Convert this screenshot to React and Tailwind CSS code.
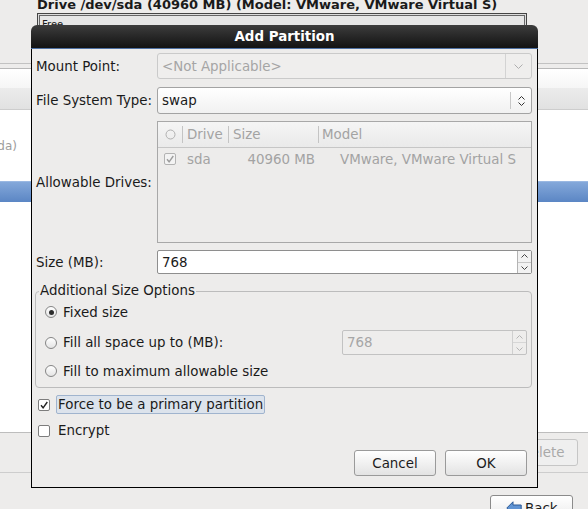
import React from "react";

const Radio = ({ checked }) => (
  <span className="flex h-[12px] w-[12px] shrink-0 items-center justify-center rounded-full border border-[#858585] bg-linear-to-b from-white to-[#e4e4e4]">
    {checked && <span className="h-[5px] w-[5px] rounded-full bg-[#2b2b2b]" />}
  </span>
);

const CheckBox = ({ checked, disabled }) => (
  <span
    className={`flex h-[12px] w-[12px] shrink-0 items-center justify-center rounded-[2px] border ${
      disabled ? "border-[#b3b3b3] bg-[#f3f3f3]" : "border-[#7d7d7d] bg-white"
    }`}
  >
    {checked && (
      <svg width="10" height="10" viewBox="0 0 10 10">
        <path
          d="M2 5.3 L4.1 7.8 L8.3 2"
          fill="none"
          stroke={disabled ? "#9c9c9c" : "#232323"}
          strokeWidth="1.4"
        />
      </svg>
    )}
  </span>
);

const ArrowUp = ({ color = "#4a4a4a" }) => (
  <svg width="7" height="4" viewBox="0 0 7 4">
    <polyline points="0.5,3.5 3.5,0.5 6.5,3.5" fill="none" stroke={color} strokeWidth="1" />
  </svg>
);

const ArrowDown = ({ color = "#4a4a4a" }) => (
  <svg width="7" height="4" viewBox="0 0 7 4">
    <polyline points="0.5,0.5 3.5,3.5 6.5,0.5" fill="none" stroke={color} strokeWidth="1" />
  </svg>
);

const Spin = ({ value, disabled, className }) => (
  <div
    className={`flex items-stretch rounded-[2px] border ${
      disabled ? "border-[#c2c2c2] bg-[#eeedec] text-[#a6a6a6]" : "border-[#8e8e8e] bg-white text-[#1a1a1a]"
    } ${className}`}
  >
    <span className="flex flex-1 items-center pl-[4px]">{value}</span>
    <span
      className={`flex w-[14px] flex-col border-l ${
        disabled ? "border-[#cfcfcf]" : "border-[#b4b4b4] bg-[#f2f2f2]"
      }`}
    >
      <span className={`flex flex-1 items-center justify-center border-b ${disabled ? "border-[#d6d6d6]" : "border-[#c6c6c6]"}`}>
        <ArrowUp color={disabled ? "#b4b4b4" : "#444"} />
      </span>
      <span className="flex flex-1 items-center justify-center">
        <ArrowDown color={disabled ? "#b4b4b4" : "#444"} />
      </span>
    </span>
  </div>
);

const Sep = () => <span className="my-[4px] w-px self-stretch bg-[#c4c4c4]" />;

const Button = ({ children }) => (
  <button className="flex h-[26px] w-[82px] items-center justify-center rounded-[3px] border border-[#9a9a9a] bg-linear-to-b from-white to-[#e3e3e3] text-[13.4px] text-[#1c1c1c]">
    {children}
  </button>
);

export default function App() {
  return (
    <div className="relative h-[509px] w-[588px] overflow-hidden bg-[#edeceb] font-['DejaVu_Sans','Liberation_Sans',sans-serif] text-[13.4px] leading-[15px] text-[#1a1a1a]">
      {/* installer page behind the dialog */}
      <div className="mt-[-3px] h-[15px] whitespace-nowrap pl-[37px] text-[13px] font-bold">
        Drive /dev/sda (40960 MB) (Model: VMware, VMware Virtual S)
      </div>
      <div className="ml-[37px] mt-[1px] h-[45px] w-[490px] border border-[#444] bg-[#dcdcdc] p-[1px]">
        <div className="h-full border border-[#666] bg-[#e6e6e6] pl-[2px] pt-[3px] text-[10px] leading-[12px]">Free</div>
      </div>
      <div className="mt-[5px] h-px bg-[#c2c2c2]" />
      <div className="h-[4px]" />
      <div className="h-px bg-[#b8b8b8]" />
      <div className="h-[19px] bg-linear-to-b from-white to-[#f6f6f6]" />
      <div className="h-[22px] border-b border-[#cdcdcd] bg-linear-to-b from-[#ececec] to-[#e1e1e1]" />
      <div className="h-[322px] bg-white">
        <div className="h-[28px]" />
        <div className="flex h-[16px] w-[17px] items-center justify-end overflow-hidden whitespace-nowrap text-[12px] text-[#9d9d9d]">
          sda (/dev/sda)
        </div>
        <div className="h-[27px]" />
        <div className="h-[21px] border-t border-[#9ab8e2] bg-linear-to-b from-[#84a8da] to-[#5b86c4]" />
      </div>
      <div className="h-px bg-[#bdbdbd]" />
      <div className="mt-[6px] flex justify-end pr-[10px]">
        <div className="flex h-[27px] w-[71px] items-center justify-center rounded-[3px] border border-[#c6c6c6] bg-[#efefef] text-[#a9a9a9]">
          Delete
        </div>
      </div>
      <div className="mt-[6px] h-px bg-[#cdcdcd]" />
      <div className="mt-[22px] flex justify-end pr-[15px]">
        <div className="flex h-[30px] w-[83px] items-start gap-[3px] rounded-[3px] border border-[#8b8b8b] bg-linear-to-b from-white to-[#e6e6e6] pl-[15px] pt-[5px]">
          <svg width="16" height="14" viewBox="0 0 16 14">
            <path d="M0.8 7 L7 0.8 L7 4 L15.2 4 L15.2 10 L7 10 L7 13.2 Z" fill="#5f93d3" stroke="#2c5a97" strokeWidth="1" />
          </svg>
          <span>Back</span>
        </div>
      </div>

      {/* Add Partition dialog */}
      <div className="absolute left-[31px] top-[25px] flex h-[463px] w-[507px] flex-col">
        <div className="flex h-[24px] items-center justify-center rounded-t-[6px] border-b border-[#4f71a3] bg-linear-to-b from-[#3d3d3d] to-[#131313] font-bold text-white">
          Add Partition
        </div>
        <div className="flex flex-1 flex-col border-x border-b border-black bg-[#edeceb] pl-[4px] pr-[5px] pt-[4px]">
          <div className="flex items-center">
            <span className="w-[121px]">Mount Point:</span>
            <div className="flex h-[26px] flex-1 items-stretch rounded-[3px] border border-[#cacaca] bg-[#efeeed]">
              <span className="flex flex-1 items-center pl-[4px] text-[#a5a5a5]">&lt;Not Applicable&gt;</span>
              <span className="flex w-[26px] items-center justify-center border-l border-[#d3d3d3]">
                <svg width="9" height="5" viewBox="0 0 9 5">
                  <polyline points="0.5,0.5 4.5,4.5 8.5,0.5" fill="none" stroke="#aeaeae" strokeWidth="1" />
                </svg>
              </span>
            </div>
          </div>

          <div className="mt-[8px] flex items-center">
            <span className="w-[121px]">File System Type:</span>
            <div className="flex h-[27px] flex-1 items-stretch rounded-[3px] border border-[#a3a3a3] bg-linear-to-b from-white to-[#f1f1f1]">
              <span className="flex flex-1 items-center pl-[4px]">swap</span>
              <span className="my-[4px] w-px bg-[#c8c8c8]" />
              <span className="flex w-[20px] flex-col items-center justify-center gap-[2px]">
                <ArrowUp color="#333" />
                <ArrowDown color="#333" />
              </span>
            </div>
          </div>

          <div className="mt-[7px] flex items-center">
            <span className="w-[121px]">Allowable Drives:</span>
            <div className="flex h-[122px] flex-1 flex-col border border-[#a8a8a8] text-[#a3a3a3]">
              <div className="flex h-[26px] items-stretch border-b border-[#c6c6c6] bg-linear-to-b from-[#f5f5f5] to-[#eaeaea]">
                <span className="flex w-[24px] items-center justify-center">
                  <svg width="11" height="11" viewBox="0 0 11 11">
                    <circle cx="5.5" cy="5.5" r="4.5" fill="none" stroke="#b0b0b0" strokeWidth="1" />
                  </svg>
                </span>
                <Sep />
                <span className="flex w-[45px] items-center pl-[4px]">Drive</span>
                <Sep />
                <span className="flex w-[89px] items-center pl-[4px]">Size</span>
                <Sep />
                <span className="flex flex-1 items-center pl-[3px]">Model</span>
              </div>
              <div className="flex h-[22px] items-center whitespace-nowrap">
                <span className="flex w-[24px] justify-center">
                  <CheckBox checked disabled />
                </span>
                <span className="w-px" />
                <span className="w-[45px] pl-[4px]">sda</span>
                <span className="w-px" />
                <span className="w-[89px] pr-[3px] text-right">40960 MB</span>
                <span className="w-px" />
                <span className="flex-1 overflow-hidden pl-[21px]">VMware, VMware Virtual S</span>
              </div>
            </div>
          </div>

          <div className="mt-[7px] flex items-center">
            <span className="w-[121px]">Size (MB):</span>
            <Spin value="768" className="h-[24px] flex-1" />
          </div>

          <div className="relative ml-[-1px] mt-[17px] h-[97px] rounded-[4px] border border-[#bcbcbc] pl-[9px] pr-[4px] pt-[10px]">
            <span className="absolute left-[3px] top-[-9px] bg-[#edeceb] px-[1px]">Additional Size Options</span>
            <div className="flex h-[20px] items-center gap-[6px]">
              <Radio checked />
              <span>Fixed size</span>
            </div>
            <div className="mt-[8px] flex h-[25px] items-center justify-between">
              <div className="flex items-center gap-[6px]">
                <Radio />
                <span>Fill all space up to (MB):</span>
              </div>
              <Spin value="768" disabled className="h-[25px] w-[185px]" />
            </div>
            <div className="mt-[6px] flex h-[20px] items-center gap-[6px]">
              <Radio />
              <span>Fill to maximum allowable size</span>
            </div>
          </div>

          <div className="mt-[7px] flex h-[19px] items-center gap-[6px] pl-[2px]">
            <CheckBox checked />
            <span className="flex h-[19px] items-center rounded-[2px] border border-[#a0b4ce] bg-[#dce3ec] px-[1px]">
              Force to be a primary partition
            </span>
          </div>

          <div className="mt-[7px] flex h-[19px] items-center gap-[8px] pl-[2px]">
            <CheckBox />
            <span>Encrypt</span>
          </div>

          <div className="mt-[10px] flex justify-end gap-[9px] pr-[5px]">
            <Button>Cancel</Button>
            <Button>OK</Button>
          </div>
        </div>
      </div>
    </div>
  );
}
